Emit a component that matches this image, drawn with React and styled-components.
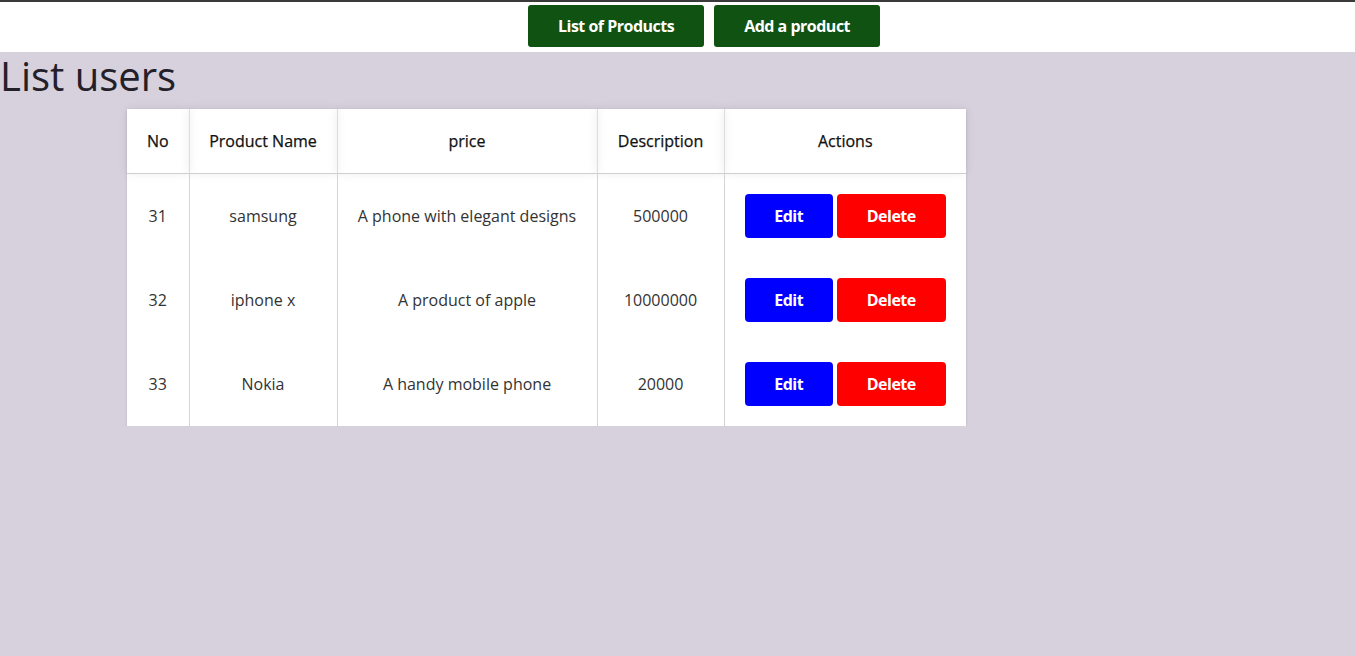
import React from 'react'
import styled, { createGlobalStyle } from 'styled-components'

const GlobalStyle = createGlobalStyle`
    body{
        margin:0;
        background:#d6d1dc;
        font-family:"Open Sans", "Liberation Sans", sans-serif;
        color:#222;
    }
`;

const products = [
    { id: 31, name: 'samsung', desc: 'A phone with elegant designs', price: '500000' },
    { id: 32, name: 'iphone x', desc: 'A product of apple', price: '10000000' },
    { id: 33, name: 'Nokia', desc: 'A handy mobile phone', price: '20000' },
];

const App = () => {
    return (
        <>
            <GlobalStyle />
            <Nav>
                <NavButton>List of Products</NavButton>
                <NavButton>Add a product</NavButton>
            </Nav>
            <Title>List users</Title>
            <Table>
                <thead>
                    <tr>
                        <Th w={62}>No</Th>
                        <Th w={148}>Product Name</Th>
                        <Th w={260}>price</Th>
                        <Th w={127}>Description</Th>
                        <Th w={242}>Actions</Th>
                    </tr>
                </thead>
                <tbody>
                    {products.map((p) => (
                        <tr key={p.id}>
                            <Td>{p.id}</Td>
                            <Td>{p.name}</Td>
                            <Td>{p.desc}</Td>
                            <Td>{p.price}</Td>
                            <Td>
                                <Actions>
                                    <ActionButton color="#0000ff" w={88}>Edit</ActionButton>
                                    <ActionButton color="#ff0000" w={109}>Delete</ActionButton>
                                </Actions>
                            </Td>
                        </tr>
                    ))}
                </tbody>
            </Table>
        </>
    )
}

export default App

const Nav = styled.div`
    background:#fff;
    border-top:2px solid #3a3a3a;
    height:52px;
    display:flex;
    justify-content:center;
    align-items:flex-start;
    gap:10px;
    padding-left:53px;
    padding-top:3px;
    box-sizing:border-box;
`;

const NavButton = styled.button`
    background:#0f5212;
    color:#fff;
    border:none;
    border-radius:3px;
    height:42px;
    padding:0 30px;
    font-family:"Open Sans", sans-serif;
    font-weight:700;
    font-size:16px;
    letter-spacing:-0.5px;
`;

const Title = styled.h1`
    margin:0 0 9px 0;
    font-size:40px;
    font-weight:400;
    line-height:48px;
    color:#23202a;
`;

const Table = styled.table`
    margin-left:127px;
    border-collapse:collapse;
    background:#fff;
    box-shadow:0 1px 3px rgba(0,0,0,0.12);
    font-size:16px;
    color:#333;
`;

const Th = styled.th`
    width:${(p) => p.w}px;
    height:64px;
    padding:0;
    box-sizing:border-box;
    font-weight:500;
    font-size:16px;
    color:#111;
    -webkit-text-stroke:0.25px #111;
    border-left:1px solid #ddd;
    border-bottom:1px solid #cfcfcf;
    box-shadow:0 0 10px rgba(0,0,0,0.08);
    &:first-child{ border-left:none; }
`;

const Td = styled.td`
    height:84px;
    padding:0;
    text-align:center;
    border-left:1px solid #d4d4d4;
    &:first-child{ border-left:none; }
`;

const Actions = styled.div`
    display:flex;
    justify-content:center;
    gap:4px;
`;

const ActionButton = styled.button`
    width:${(p) => p.w}px;
    height:44px;
    background:${(p) => p.color};
    color:#fff;
    border:none;
    border-radius:4px;
    font-family:"Open Sans", sans-serif;
    font-weight:700;
    font-size:16px;
    letter-spacing:-0.5px;
`;
